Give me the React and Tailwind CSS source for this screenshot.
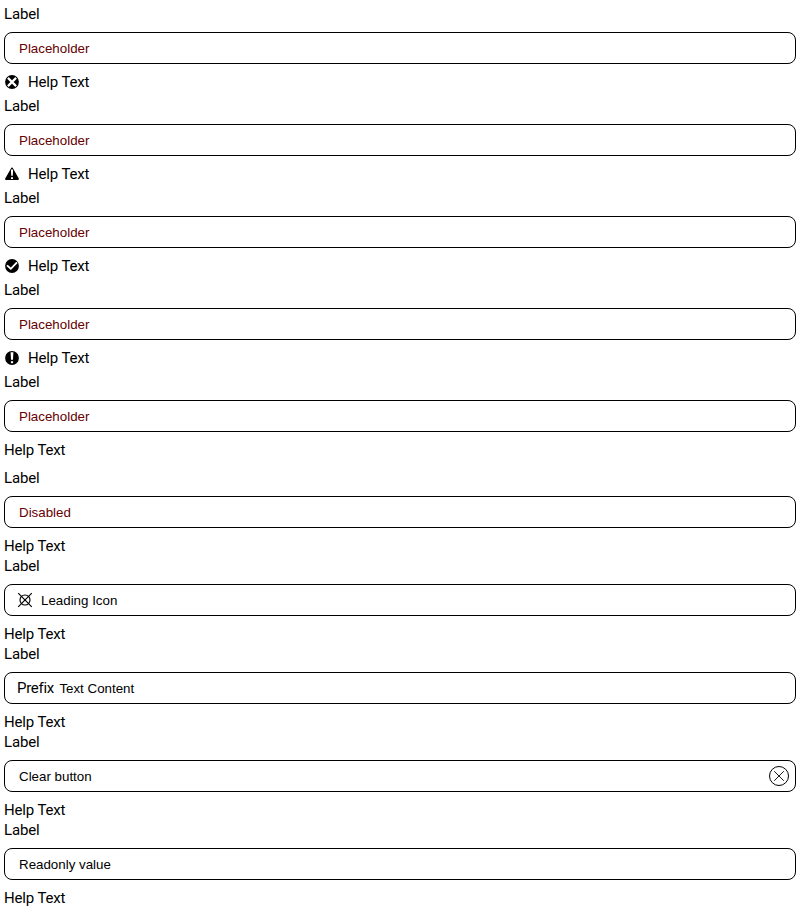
const circlePath = 'M8 1.1a6.9 6.9 0 1 0 0 13.8A6.9 6.9 0 0 0 8 1.1Z';

function StatusIcon({ type }) {
  return (
    <svg viewBox="0 0 16 16" className="size-4 shrink-0" fill="none">
      {type === 'warning' ? (
        <path d="M8 2.4 14 13H2Z" fill="#000" stroke="#000" strokeWidth="1.8" strokeLinejoin="round" />
      ) : (
        <path d={circlePath} fill="#000" />
      )}
      {type === 'error' && <path d="m3.9 3.9 8.2 8.2m0-8.2-8.2 8.2" stroke="#fff" strokeWidth="2.2" />}
      {type === 'warning' && (
        <>
          <path d="M6.9 3.6h2.2L8.8 9.8H7.2Z" fill="#fff" />
          <path d="M8 11.2v1.8" stroke="#fff" strokeWidth="2" />
        </>
      )}
      {type === 'success' && <path d="m3 7.4 3.8 3.4 6.2-6.4" stroke="#fff" strokeWidth="1.9" />}
      {type === 'info' && (
        <>
          <path d="M6.6 2.2h2.8L9 9.8H7Z" fill="#fff" />
          <path d="M8 11.2v2" stroke="#fff" strokeWidth="2.2" />
        </>
      )}
    </svg>
  );
}

function LeadingIcon() {
  return (
    <svg viewBox="0 0 16 16" className="size-4 shrink-0" fill="none" stroke="#000" strokeWidth="1.15">
      <circle cx="8" cy="8" r="5" />
      <path d="m1.2 1.2 13.6 13.6m0-13.6L1.2 14.8" />
    </svg>
  );
}

function ClearButton() {
  return (
    <button type="button" className="ml-auto flex size-5 items-center justify-center rounded-full border border-black">
      <svg viewBox="0 0 12 12" className="size-3" fill="none" stroke="#000" strokeWidth="0.9">
        <path d="m1.2 1.2 9.6 9.6m0-9.6-9.6 9.6" />
      </svg>
    </button>
  );
}

function Field({ status, value, muted, icon, prefix, clearable }) {
  return (
    <div className="flex flex-col gap-2">
      <div className="h-5">Label</div>
      <div className="flex h-8 items-center rounded-lg border border-black pr-1.5 pl-3">
        {icon && <span className="mr-1.5"><LeadingIcon /></span>}
        {prefix && <span className="mr-[3.5px] tracking-[-0.3px]">{prefix}</span>}
        <span className={`pt-0.5 pl-0.5 font-['Liberation_Sans',Arial,sans-serif] text-[13.3333px] tracking-normal ${muted ? 'text-[#660000]' : 'text-black'}`}>
          {value}
        </span>
        {clearable && <ClearButton />}
      </div>
      <div className="flex h-5 items-center gap-2">
        {status && <StatusIcon type={status} />}
        <span>Help Text</span>
      </div>
    </div>
  );
}

export default function App() {
  return (
    <main className="h-[912px] bg-white p-1 font-[Roboto,sans-serif] text-[15px] leading-5 tracking-[-0.15px] text-black">
      <div className="mb-2 flex flex-col gap-1">
        <Field status="error" value="Placeholder" muted />
        <Field status="warning" value="Placeholder" muted />
        <Field status="success" value="Placeholder" muted />
        <Field status="info" value="Placeholder" muted />
        <Field value="Placeholder" muted />
      </div>
      <Field value="Disabled" muted />
      <Field value="Leading Icon" icon />
      <Field value="Text Content" prefix="Prefix" />
      <Field value="Clear button" clearable />
      <Field value="Readonly value" />
    </main>
  );
}
